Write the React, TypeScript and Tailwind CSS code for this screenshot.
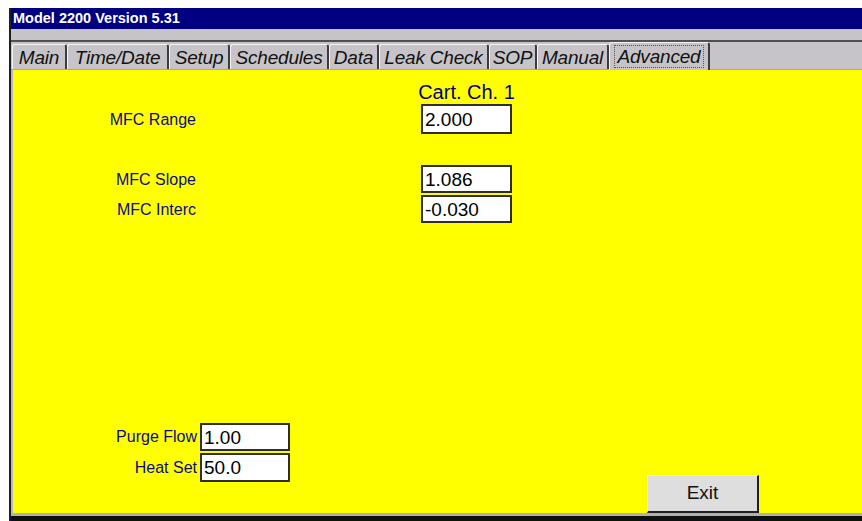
const tabs = [
  { label: "Main", width: 55 },
  { label: "Time/Date", width: 102 },
  { label: "Setup", width: 61 },
  { label: "Schedules", width: 99 },
  { label: "Data", width: 50 },
  { label: "Leak Check", width: 110 },
  { label: "SOP", width: 48 },
  { label: "Manual", width: 72 },
  { label: "Advanced", width: 101, active: true },
];

const font = "font-['Liberation_Sans',Arial,sans-serif]";

function ValueBox({ value, h = "h-[28px]", w = "w-[91px]" }: { value: string; h?: string; w?: string }) {
  return (
    <div
      className={`${w} ${h} flex items-center border-2 border-[#2e2e2e] bg-white pl-[2px] text-[19px] leading-none text-black`}
    >
      {value}
    </div>
  );
}

function Tab({ label, width, active }: { label: string; width: number; active?: boolean }) {
  return (
    <div
      style={{ width }}
      className={`flex items-center justify-center rounded-t-[3px] border-t border-l border-t-[#f4f4f4] border-l-[#f4f4f4] border-r-2 border-r-[#3c3c3c] bg-[#c6c4c8] ${
        active ? "h-[28px] -mb-[1px]" : "h-[25px]"
      }`}
    >
      <span
        className={`italic text-[19px] leading-[19px] tracking-[-0.2px] text-[#111] whitespace-nowrap ${
          active ? "outline outline-1 outline-dotted outline-[#555] outline-offset-[1px] px-[2px]" : ""
        }`}
      >
        {label}
      </span>
    </div>
  );
}

export default function App() {
  return (
    <div className={`h-[521px] w-[862px] overflow-hidden bg-white pl-[9px] pt-[8px] ${font}`}>
      <div className="flex h-full flex-col border-l-2 border-[#202020]">
        {/* caption */}
        <div className="flex h-[21px] items-center bg-[#000080] pl-[2px] text-[14.5px] font-bold text-white">
          Model 2200 Version 5.31
        </div>

        {/* menu strip */}
        <div className="h-[13px] border-b-2 border-[#505050] bg-[#c6c4c8]" />

        {/* tab row */}
        <div className="flex h-[28px] items-end border-b border-[#a8a6aa] bg-[#c6c4c8] pl-[1px]">
          {tabs.map((t) => (
            <Tab key={t.label} label={t.label} width={t.width} active={t.active} />
          ))}
        </div>

        {/* page */}
        <div className="flex flex-1 flex-col border-l-2 border-b-[3px] border-l-[#b8b8b8] border-b-[#b0b0b0] bg-[#ffff00] text-[16px] text-[#0c0c84]">
          <div className="ml-[408px] mt-[11px] flex w-[91px] justify-center whitespace-nowrap text-[20px] leading-[22px] text-[#000080]">
            Cart. Ch. 1
          </div>

          <div className="mt-[1px] flex items-center">
            <div className="w-[183px] pt-[2px] text-right">MFC Range</div>
            <div className="ml-[225px]">
              <ValueBox value="2.000" h="h-[30px]" />
            </div>
          </div>

          <div className="mt-[31px] flex items-center">
            <div className="w-[183px] pt-[2px] text-right">MFC Slope</div>
            <div className="ml-[225px]">
              <ValueBox value="1.086" />
            </div>
          </div>

          <div className="mt-[2px] flex items-center">
            <div className="w-[183px] pt-[2px] text-right">MFC Interc</div>
            <div className="ml-[225px]">
              <ValueBox value="-0.030" />
            </div>
          </div>

          <div className="flex-1" />

          <div className="flex items-end">
            <div className="flex flex-col gap-[2px] pb-[31px]">
              <div className="flex items-center">
                <div className="w-[184px] text-right">Purge Flow</div>
                <div className="ml-[3px]">
                  <ValueBox value="1.00" w="w-[90px]" />
                </div>
              </div>
              <div className="flex items-center">
                <div className="w-[184px] text-right">Heat Set</div>
                <div className="ml-[3px]">
                  <ValueBox value="50.0" w="w-[90px]" h="h-[29px]" />
                </div>
              </div>
            </div>

            <button className="ml-[357px] h-[38px] w-[112px] border-t border-l border-t-[#f8f8f8] border-l-[#f8f8f8] border-r-2 border-b-2 border-r-[#202020] border-b-[#202020] bg-[#dedede] text-[19px] text-[#111]">
              Exit
            </button>
          </div>
        </div>

        <div className="h-[5px] shrink-0 bg-[#101010]" />
      </div>
    </div>
  );
}
